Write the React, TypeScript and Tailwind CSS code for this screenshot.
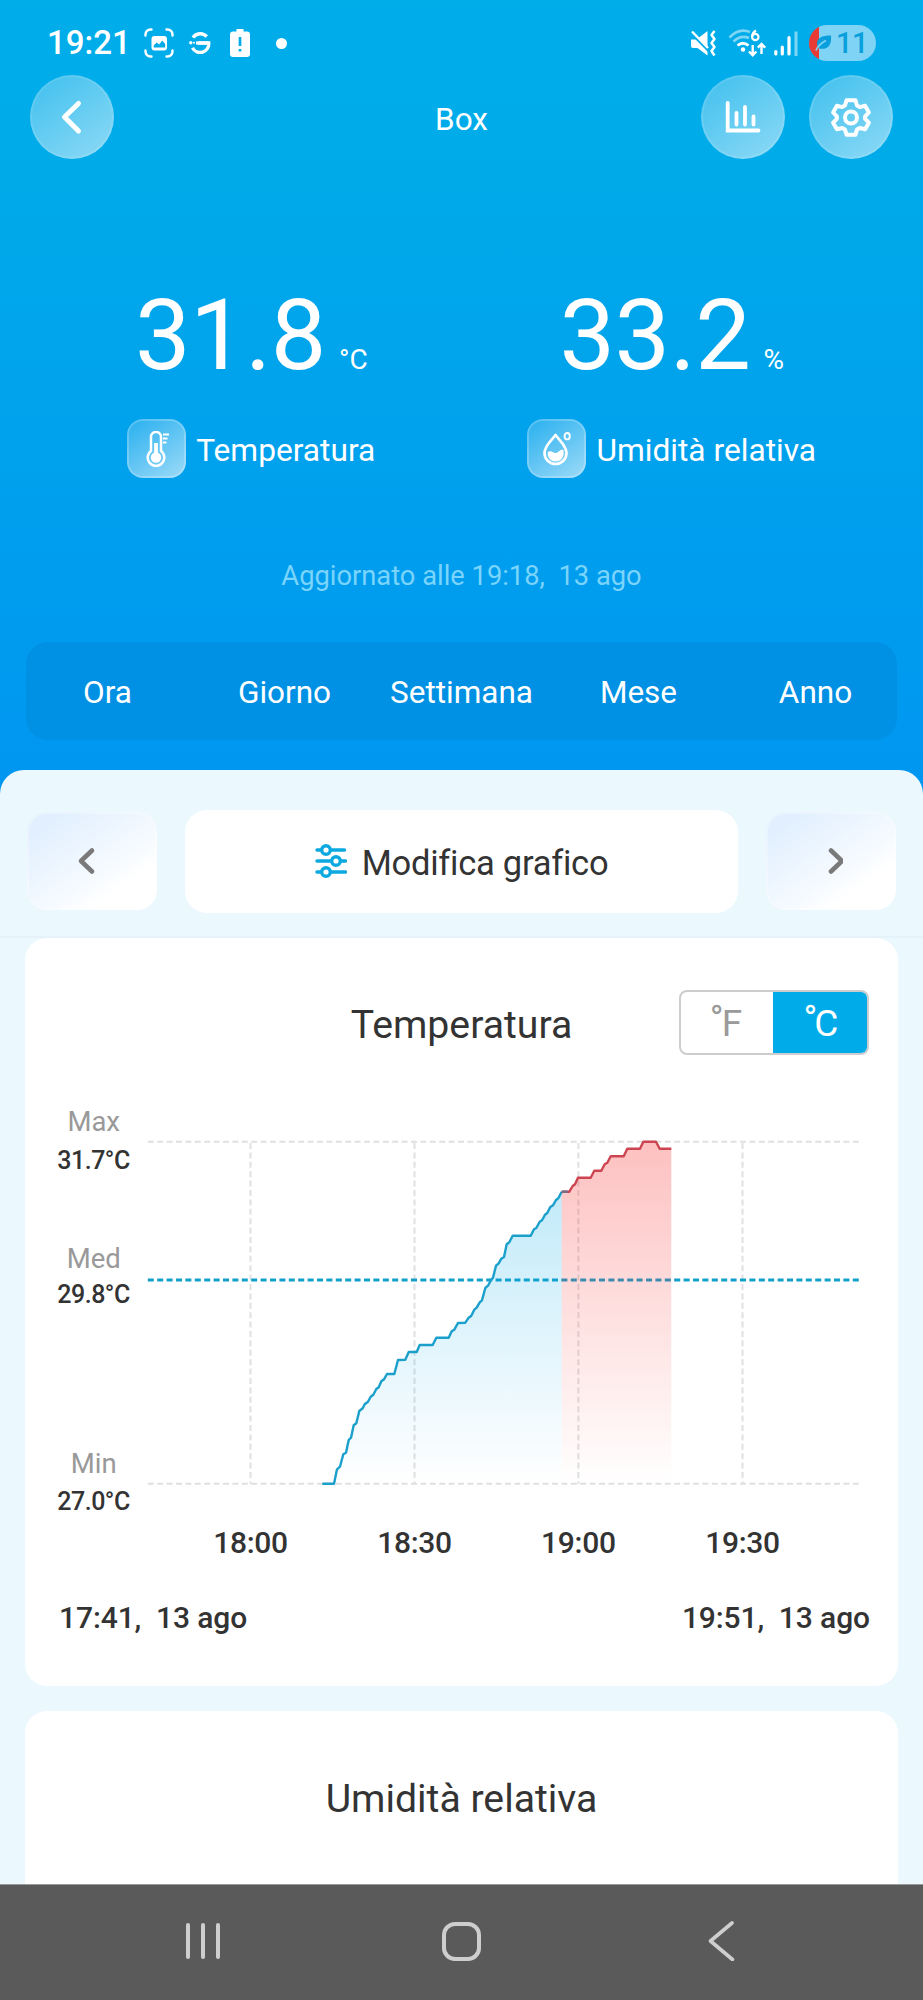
import React from "react";

const coolLine =
  "297.3,393.7 309,393.7 312,379.3 315,376.7 318.3,364.3 321,362.7 323.7,350 326,347.7 328.7,335.3 331.3,333.3 334.3,321 337.7,318.3 339.7,314.3 343,311.7 345.7,306.7 348.3,304.7 351.3,299 353.7,297.3 356.3,291.3 359,289.3 362,284 369.3,284 373,270 380.3,269.7 383.7,262 391.7,262 394.7,255 407.7,255 411.3,247.7 423.7,247.7 426.7,241.3 429.3,239.7 433,233 440.3,232.7 443.7,227.7 446.3,225.7 449.3,219.7 451.7,217.7 454.7,212.3 457,210.3 460.3,198 463,195.7 466,190 468,187.7 471,175.7 473.7,173.3 476.3,168.7 479,167 481.7,154.3 484.3,152.3 487.7,145.7 505.7,145.7 509,139.3 511.3,138 514.7,131.7 517,130.3 520,124.7 522.3,123 525.3,117 528,115.3 531,110 533.3,108.3 536.7,101.7";
const hotLine =
  "536.7,101.7 544.3,101.7 547.7,96 550,94.3 553,87.7 565.7,87.7 569.3,80.7 576.3,80.7 579.7,74.3 582.3,72.7 585.7,66.3 598.7,66.3 602.3,58.7 615,58.7 618.3,51.7 631,51.7 634.7,58.7 646.3,58.7";

const hours = [
  { x: 225.5, label: "18:00" },
  { x: 389.5, label: "18:30" },
  { x: 553.4, label: "19:00" },
  { x: 717.5, label: "19:30" },
];

const levels = [
  { name: "Max", value: "31.7°C", nameY: 41, valueY: 78.5 },
  { name: "Med", value: "29.8°C", nameY: 178.3, valueY: 213 },
  { name: "Min", value: "27.0°C", nameY: 382.7, valueY: 420.3 },
];

function StatusBar() {
  return (
    <div className="flex h-9 items-center pl-[47px] pr-[47px]">
      <span className="w-[97px] text-[33px] font-medium leading-9">19:21</span>
      <svg className="h-[30px] w-[30px]" viewBox="0 0 30 30" fill="none">
        <g stroke="#fff" strokeWidth="2.4" strokeLinecap="round">
          <path d="M1.5 7.5V6.5a5 5 0 0 1 5-5h1M22.500 1.500h1a5 5 0 0 1 5 5v1M28.500 22.500v1a5 5 0 0 1-5 5h-1M7.500 28.500h-1a5 5 0 0 1-5-5v-1" />
        </g>
        <rect x="7.500" y="8" width="15.500" height="14.500" rx="3" fill="#fff" />
        <path d="M9.700 19.500v-2l3-3 2.500 2 3-4 3 3.500v3.500z" fill="#00abe9" />
      </svg>
      <svg className="ml-[15px] h-[22px] w-[22px]" viewBox="0 0 22 22" fill="none" stroke="#fff">
        <path d="M17.700 4.700A8.600 8.600 0 0 0 4 5.600M3.500 15.800A8.600 8.600 0 0 0 19.700 11H9" strokeWidth="3.400" />
        <path d="M19.700 11H7" strokeWidth="3.200" />
        <circle cx="1.800" cy="10.800" r="1.700" fill="#fff" stroke="none" />
        <circle cx="5" cy="10.800" r="1" fill="#fff" stroke="none" />
      </svg>
      <svg className="ml-[19px] h-7 w-5" viewBox="0 0 20 28">
        <path d="M6.500 0h7v2.500H17a3 3 0 0 1 3 3V25a3 3 0 0 1-3 3H3a3 3 0 0 1-3-3V5.500a3 3 0 0 1 3-3h3.500z" fill="#fff" />
        <path d="M10 8v9M10 20v2.500" stroke="#00abe9" strokeWidth="2.700" />
      </svg>
      <span className="ml-[26px] h-[11px] w-[11px] rounded-full bg-white" />

      <svg className="ml-auto h-[27px] w-[27px]" viewBox="0 0 27 27" fill="none">
        <path d="M1 9.500h5.500L17.500 1v24.500L7.500 18H3a2 2 0 0 1-2-2z" fill="#fff" />
        <path d="M0 1.500 20 22" stroke="#00abe9" strokeWidth="3" />
        <path d="M2 1.500 18 18" stroke="#fff" strokeWidth="2.500" />
        <path d="m24.500 1-3 4 3 4-3 4 3 4-3 4 3 4.500" stroke="#fff" strokeWidth="2.500" strokeLinejoin="round" />
      </svg>
      <svg className="ml-[11px] h-7 w-[38px]" viewBox="0 0 38 28" fill="none">
        <path d="M1.500 8.500Q11 -1.500 22 3" stroke="#7fd5f4" strokeWidth="2.800" />
        <path d="M5.500 12.500Q13 5.500 21 9" stroke="#7fd5f4" strokeWidth="2.800" />
        <path d="M9.500 16.500q5.500-4.500 11 0" stroke="#fff" strokeWidth="2.800" />
        <circle cx="15" cy="20.500" r="2.200" fill="#fff" />
        <path d="M28 1.500q-3.500 2-4 6" stroke="#fff" strokeWidth="2.200" />
        <circle cx="27.300" cy="8" r="3.200" stroke="#fff" strokeWidth="2.200" />
        <path d="M24.700 16v10M21 22.500l3.700 3.700 3.700-3.700M33.500 25V15M29.800 18.700l3.700-3.700 3.700 3.700" stroke="#fff" strokeWidth="2.400" />
      </svg>
      <svg className="ml-2 h-[25px] w-6" viewBox="0 0 24 25">
        <path d="M1.800 23v-2.500M8.300 23v-7M15 23V6.500" stroke="#fff" strokeWidth="3.200" strokeLinecap="round" />
        <path d="M22 25V.5" stroke="#7fd5f4" strokeWidth="3" />
      </svg>
      <div className="ml-[11px] flex h-9 w-[67px] items-center overflow-hidden rounded-full bg-[linear-gradient(90deg,#e93b35_10px,#7fd3f5_10px)] pl-[6px] text-[#099fdc]">
        <svg className="h-[18px] w-[17px] shrink-0" viewBox="0 0 17 18" fill="none">
          <path d="M16 1.500C7 1.500 1.500 4 2 10c.2 2 .8 3.200 1.500 4.200C11 16.500 17 13 16 1.500z" fill="currentColor" />
          <path d="M11 6.500C6 9 3 11.500 1 16.500" stroke="#7fd3f5" strokeWidth="1.800" />
        </svg>
        <span className="ml-[4px] text-[29px] font-medium leading-9 tracking-[-0.5px]">11</span>
      </div>
    </div>
  );
}

function RoundButton({ children }: { children: React.ReactNode }) {
  return (
    <div className="flex h-[84px] w-[84px] items-center justify-center rounded-full border-2 border-white/10 bg-[linear-gradient(145deg,rgba(255,255,255,0.24),rgba(255,255,255,0.56))] bg-origin-border">
      {children}
    </div>
  );
}

function Header() {
  return (
    <div className="mt-[14px] grid h-[84px] grid-cols-[1fr_auto_1fr] items-center px-[30px]">
      <RoundButton>
        <svg className="h-9 w-6" viewBox="0 0 24 36" fill="none" stroke="#fff" strokeWidth="5" strokeLinecap="round" strokeLinejoin="round">
          <path d="M18.500 4.500 4.500 18 18.500 32" />
        </svg>
      </RoundButton>
      <h1 className="pt-[6px] text-[31.500px] leading-9">Box</h1>
      <div className="flex justify-end gap-6">
        <RoundButton>
          <svg className="h-[36px] w-[36px]" viewBox="0 0 36 36" fill="none" stroke="#fff" strokeWidth="3.800" strokeLinecap="round">
            <path d="M2.700 4v27.500H33.500" strokeLinejoin="miter" />
            <path d="M11.500 25.500V14M20 25.500V8M28.500 25.500v-8" />
          </svg>
        </RoundButton>
        <RoundButton>
          <svg className="h-[42px] w-[42px]" viewBox="0 0 42 42" fill="none" stroke="#fff" strokeWidth="4" strokeLinejoin="round">
            <path d="M16.600 4.200h8.800l1.600 5.300 2.800 1.600 5.300-1.300 3.800 6.600-3.800 3.900v2.500l3.800 3.900-3.800 6.600-5.300-1.300-2.800 1.600-1.600 5.200h-8.800L15 33.600 12.200 32l-5.300 1.300-3.800-6.600 3.800-3.900v-2.500l-3.800-3.900 3.800-6.600 5.300 1.300L15 9.500z" />
            <circle cx="21" cy="21.500" r="6" />
          </svg>
        </RoundButton>
      </div>
    </div>
  );
}

function Reading({ value, unit, label, icon }: { value: string; unit: string; label: string; icon: React.ReactNode }) {
  return (
    <div className="flex flex-col items-center">
      <div className="flex h-[100px] items-baseline">
        <span className="text-[99px] leading-[100px] tracking-[-0.5px]">{value}</span>
        <span className="ml-[13px] text-[28px] leading-7">{unit}</span>
      </div>
      <div className="mt-[34px] flex items-center">
        <div className="flex h-[59px] w-[59px] items-center justify-center rounded-2xl border-2 border-white/20 bg-[linear-gradient(145deg,rgba(255,255,255,0.15),rgba(255,255,255,0.62))] bg-origin-border">
          {icon}
        </div>
        <span className="ml-[10px] pt-[4px] text-[31.700px] leading-9">{label}</span>
      </div>
    </div>
  );
}

function ThermometerIcon() {
  return (
    <svg className="h-9 w-6" viewBox="0 0 24 36" fill="none" stroke="#fff">
      <path d="M6 6a5 5 0 0 1 10 0v14a8.300 8.300 0 1 1-10 0z" strokeWidth="2.500" />
      <path d="M11 12v13" strokeWidth="3.800" />
      <circle cx="11" cy="26.500" r="5.200" fill="#fff" stroke="none" />
      <path d="M18 3.500h6M18 7.500h4.500M18 11.500h3.500" strokeWidth="2" />
    </svg>
  );
}

function DropIcon() {
  return (
    <svg className="h-[34px] w-7" viewBox="0 0 28 34" fill="none" stroke="#fff">
      <path d="M12.500 3C9 8 1.500 13.500 1.500 21a11 11 0 0 0 22 0C23.500 13.500 16 8 12.500 3z" strokeWidth="2.700" strokeLinejoin="round" />
      <path d="M4.800 20c4-2.500 6 2.200 9 .8 2.500-1 3.500-4 6.600-2.800 1.500 7-2.800 11.500-7.900 11.500-4.700 0-8.400-4-7.700-9.500z" fill="#fff" stroke="none" />
      <ellipse cx="24.200" cy="4.200" rx="2.600" ry="3.200" strokeWidth="1.900" />
    </svg>
  );
}

function StepButton({ d, className }: { d: string; className: string }) {
  return (
    <div
      className={
        "flex h-[98px] w-[130px] items-center justify-center rounded-[20px] border-2 border-white/30 bg-[linear-gradient(145deg,#e1effe_12%,#f5faff_58%,#ffffff_75%)] bg-origin-border " +
        className
      }
    >
      <svg className="h-7 w-5" viewBox="0 0 20 28" fill="none" stroke="#7a7a7a" strokeWidth="4.600" strokeLinecap="round" strokeLinejoin="round">
        <path d={d} />
      </svg>
    </div>
  );
}

function UnitToggle() {
  return (
    <div className="mr-[29px] flex h-[65px] w-[190px] justify-self-end overflow-hidden rounded-lg border-2 border-[#cdcdcd] text-[37px] leading-[63px]">
      <span className="flex w-[94px] justify-center pr-1 text-[#9a9a9a]">
        <span className="relative -top-[5px]">°</span>
        <span className="-ml-[2px]">F</span>
      </span>
      <span className="-m-0.5 flex flex-1 justify-center bg-[#00abe9] pt-0.5 text-white">
        <span className="relative -top-[5px]">°</span>
        <span className="-ml-[3px]">C</span>
      </span>
    </div>
  );
}

function TemperatureChart() {
  return (
    <svg className="mt-[35px] block h-[480px] w-[873px]" viewBox="0 0 873 480" fill="none">
      <defs>
        <linearGradient id="cool" gradientUnits="userSpaceOnUse" x1="0" y1="52" x2="0" y2="394">
          <stop offset="0" stopColor="#00a7e6" stopOpacity="0.280" />
          <stop offset="1" stopColor="#00a7e6" stopOpacity="0" />
        </linearGradient>
        <linearGradient id="hot" gradientUnits="userSpaceOnUse" x1="0" y1="52" x2="0" y2="394">
          <stop offset="0" stopColor="#f92e2e" stopOpacity="0.300" />
          <stop offset="1" stopColor="#f92e2e" stopOpacity="0" />
        </linearGradient>
      </defs>
      <g stroke="#e0e0e0" strokeWidth="2" strokeDasharray="6 3.400">
        <path d="M122.800 51.800H834M122.800 393.700H834" />
        {hours.map((h) => (
          <path key={h.label} d={`M${h.x} 53V394`} />
        ))}
      </g>
      <path d="M122.800 190H834" stroke="#12a0cb" strokeWidth="2.800" strokeDasharray="6 3.400" />
      <polygon points={`${coolLine} 536.7,393.7`} fill="url(#cool)" />
      <polygon points={`${hotLine} 646.3,393.7 536.7,393.7`} fill="url(#hot)" />
      <g strokeWidth="2.400" strokeLinejoin="round">
        <polyline points={coolLine} stroke="#1b9fcb" />
        <polyline points={hotLine} stroke="#cc4550" />
        <path d="M536.700 101.700h6" stroke="#71708c" />
      </g>
      <g textAnchor="middle">
        {levels.map((l) => (
          <g key={l.name}>
            <text x="68.700" y={l.nameY} className="fill-[#999999] text-[27.500px]">{l.name}</text>
            <text x="68.500" y={l.valueY} className="fill-[#333333] text-[25px] font-medium tracking-[-0.5px]">{l.value}</text>
          </g>
        ))}
        {hours.map((h) => (
          <text key={h.label} x={h.x} y="462.700" className="fill-[#333333] text-[30px] font-medium tracking-[-0.3px]">{h.label}</text>
        ))}
      </g>
    </svg>
  );
}

export default function App() {
  return (
    <div className="flex h-[2000px] w-[923px] flex-col overflow-hidden bg-[linear-gradient(180deg,#00ade9_0px,#00abe9_150px,#0096f1_790px)] font-['Roboto',sans-serif] text-white">
      <div className="pt-[25px]">
        <StatusBar />
        <Header />
      </div>

      <div className="mt-[126px] grid grid-cols-2 px-[41px]">
        <Reading value="31.8" unit="°C" label="Temperatura" icon={<ThermometerIcon />} />
        <Reading value="33.2" unit="%" label="Umidità relativa" icon={<DropIcon />} />
      </div>
      <p className="mt-[80px] whitespace-pre text-center text-[27.300px] leading-9 text-[#7ad4fb]">Aggiornato alle 19:18,  13 ago</p>

      <div className="mx-[26px] mt-12 h-[98px] rounded-[22px] bg-[#0090e4]">
        <div className="-mx-[7px] grid h-full grid-cols-5 items-center pt-1 text-center text-[31.500px] leading-9">
          <span>Ora</span>
          <span>Giorno</span>
          <span>Settimana</span>
          <span>Mese</span>
          <span>Anno</span>
        </div>
      </div>

      <div className="mt-[30px] min-h-0 flex-1 overflow-hidden rounded-t-3xl bg-[#ebf8fe] text-[#333333]">
        <div className="flex h-[168px] items-center justify-between border-b-2 border-[#e5f2f9] px-[27px] pt-4">
          <StepButton d="M16 3.500 5 14l11 10.500" className="pr-3" />
          <div className="flex h-[103px] w-[553px] items-center justify-center rounded-[22px] bg-white">
            <svg className="h-[34px] w-8" viewBox="0 0 32 34" fill="none" stroke="#0ba9df" strokeWidth="3.400" strokeLinecap="round">
              <path d="M2 6h4M16 6h13.500M2 17h13M26 17h4.500M2 28h4M16 28h14.500" />
              <circle cx="11" cy="6" r="4.300" />
              <circle cx="21" cy="17" r="4.300" />
              <circle cx="11" cy="28" r="4.300" />
            </svg>
            <span className="ml-[15px] pt-1 text-[34.500px] leading-10 tracking-[-0.25px]">Modifica grafico</span>
          </div>
          <StepButton d="M8 3.500 19 14 8 24.500" className="pl-1" />
        </div>

        <div className="mx-[25px] h-[748px] rounded-[22px] bg-white pt-[52px]">
          <div className="grid h-[65px] grid-cols-[1fr_auto_1fr] items-center">
            <h2 className="col-start-2 pt-1 text-[39.200px] leading-[48px]">Temperatura</h2>
            <UnitToggle />
          </div>
          <TemperatureChart />
          <div className="mt-[30px] flex justify-between whitespace-pre pl-[34px] pr-[28px] text-[30px] font-medium leading-9 tracking-[-0.1px]">
            <span>17:41,  13 ago</span>
            <span>19:51,  13 ago</span>
          </div>
        </div>

        <div className="mx-[25px] mt-[25px] h-[300px] rounded-t-[22px] bg-white pt-[64px]">
          <h2 className="text-center text-[39.200px] leading-[48px]">Umidità relativa</h2>
        </div>
      </div>

      <div className="flex h-[116px] shrink-0 items-center border-t border-[#9a9a9a] bg-[#5a5a5a] pb-[3px] pl-[186px]">
        <div className="flex gap-[11px]">
          <span className="h-9 w-1 rounded-sm bg-[#cecece]" />
          <span className="h-9 w-1 rounded-sm bg-[#cecece]" />
          <span className="h-9 w-1 rounded-sm bg-[#cecece]" />
        </div>
        <span className="ml-[222px] h-[39px] w-[39px] rounded-[13px] border-4 border-[#cecece]" />
        <svg className="ml-[227px] h-10 w-7" viewBox="0 0 28 40" fill="none" stroke="#cecece" strokeWidth="3.600" strokeLinecap="round" strokeLinejoin="round">
          <path d="M24 2 2.500 20 24.500 38.500" />
        </svg>
      </div>
    </div>
  );
}
